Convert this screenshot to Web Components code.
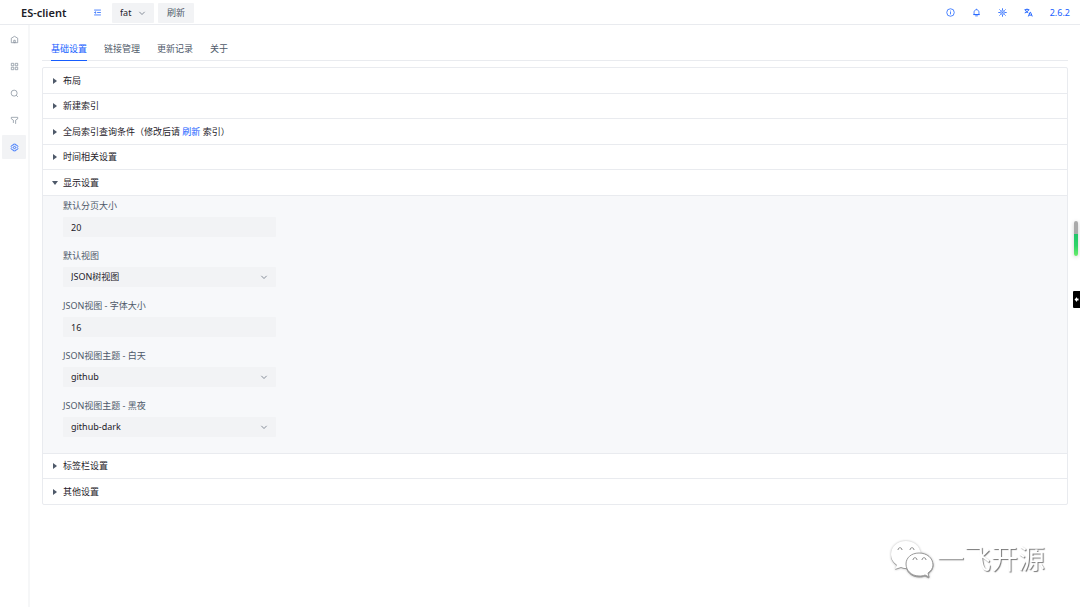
<!DOCTYPE html>
<html lang="zh-CN">
<head>
<meta charset="utf-8">
<meta name="viewport" content="width=device-width, initial-scale=1">
<title>ES-client</title>
<style>
  :root {
    --primary: #165dff;
    --text-1: #1d2129;
    --text-2: #4e5969;
    --text-3: #86909c;
    --fill: #f2f3f5;
    --body: #f7f8fa;
    --border: #e9ebef;
  }

  html, body {
    margin: 0;
    background: #fff;
    color: var(--text-1);
    font: 9px/16px "Noto Sans", "Noto Sans CJK SC", sans-serif;
  }
</style>
</head>
<body>
<es-app>
  <es-header slot="header" name="ES-client" version="2.6.2"></es-header>
  <es-sidebar slot="side"></es-sidebar>

  <es-tabs>
    <a href="#base" aria-current="page">基础设置</a>
    <a href="#link">链接管理</a>
    <a href="#record">更新记录</a>
    <a href="#about">关于</a>
  </es-tabs>

  <es-collapse>
    <es-panel><span slot="title">布局</span></es-panel>
    <es-panel><span slot="title">新建索引</span></es-panel>
    <es-panel><span slot="title">全局索引查询条件（修改后请 <a href="#refresh">刷新</a> 索引）</span></es-panel>
    <es-panel><span slot="title">时间相关设置</span></es-panel>
    <es-panel open>
      <span slot="title">显示设置</span>
      <es-field label="默认分页大小" value="20"></es-field>
      <es-field label="默认视图" value="JSON树视图" type="select"></es-field>
      <es-field label="JSON视图 - 字体大小" value="16"></es-field>
      <es-field label="JSON视图主题 - 白天" value="github" type="select"></es-field>
      <es-field label="JSON视图主题 - 黑夜" value="github-dark" type="select"></es-field>
    </es-panel>
    <es-panel><span slot="title">标签栏设置</span></es-panel>
    <es-panel><span slot="title">其他设置</span></es-panel>
  </es-collapse>
</es-app>
<es-meter></es-meter>
<es-drawer-handle></es-drawer-handle>
<es-watermark>一飞开源</es-watermark>

<script>
const ICONS = {
  fold: '<path d="M42 11H6M42 24H22M42 37H6M14 28l-6-4 6-4v8Z"/>',
  home: '<path d="M7 17 24 7l17 10v24H7V17ZM20 28h8v13h-8V28Z"/>',
  apps: '<path d="M7 7h13v13H7V7Zm21 0h13v13H28V7ZM7 28h13v13H7V28Zm21 0h13v13H28V28Z"/>',
  search: '<circle cx="22" cy="22" r="16"/><path d="m33 33 9 9"/>',
  filter: '<path d="M30 42V22l11-7V7H7v8l11 7v15"/>',
  settings: '<path d="M19 6h10l2 6 6-1 5 8-4 5 4 5-5 8-6-1-2 6H19l-2-6-6 1-5-8 4-5-4-5 5-8 6 1 2-6Z"/><circle cx="24" cy="24" r="6"/>',
  info: '<circle cx="24" cy="24" r="20"/><path d="M24 20v14M24 14v4"/>',
  bell: '<path d="M24 9c7 0 13 6 13 13v13H11V22c0-7 6-13 13-13Zm0 0V4M6 35h36M17 42h14"/>',
  sun: '<circle cx="24" cy="24" r="10"/><circle cx="24" cy="24" r="3"/><path stroke-width="5" d="M24 2v8M24 38v8M2 24h8M38 24h8M8 8l6 6M34 34l6 6M8 40l6-6M34 14l6-6"/>',
  lang: '<path stroke-width="5" d="M3 9h25M16 3v6M7 9c2 9 8 14 16 17M25 9C23 18 15 23 4 26M23 45l9-22h3l9 22M27 38h13"/>',
  down: '<path d="M40 17 24 33 8 17"/>',
};

class EsIcon extends HTMLElement {
  constructor() {
    super();
    this.attachShadow({ mode: 'open' });
    this.shadowRoot.innerHTML = `
      <style>
        :host { display: block; width: 9px; height: 9px; flex: none; }
        svg { display: block; width: 100%; height: 100%; }
      </style>
      <svg viewBox="0 0 48 48" fill="none" stroke="currentColor" stroke-width="4" aria-hidden="true">
        ${ICONS[this.getAttribute('name')] || ''}
      </svg>`;
  }
}
window.customElements.define('es-icon', EsIcon);

class EsApp extends HTMLElement {
  constructor() {
    super();
    this.attachShadow({ mode: 'open' });
    this.shadowRoot.innerHTML = `
      <style>
        :host { display: flex; flex-direction: column; min-height: 100vh; }
        .body { display: flex; flex: 1; }
        main { flex: 1; min-width: 0; padding: 16px 12px; }
      </style>
      <slot name="header"></slot>
      <div class="body">
        <slot name="side"></slot>
        <main><slot></slot></main>
      </div>`;
  }
}
window.customElements.define('es-app', EsApp);

class EsHeader extends HTMLElement {
  constructor() {
    super();
    this.attachShadow({ mode: 'open' });
    this.shadowRoot.innerHTML = `
      <style>
        :host { display: block; border-bottom: 1px solid var(--border); }
        header { display: flex; align-items: center; height: 24px; padding: 1px 10px 0 21px; box-sizing: border-box; }
        h1 { margin: 0; width: 68px; font-size: 11px; font-weight: 600; }
        button { border: 0; padding: 4px; background: none; color: var(--primary); font: inherit; }
        .index { display: grid; margin-left: 6px; }
        select, .index es-icon { grid-area: 1 / 1; }
        select, .refresh {
          appearance: none;
          box-sizing: border-box;
          height: 20px;
          border: 0;
          border-radius: 1px;
          background: var(--fill);
          color: var(--text-1);
          font: inherit;
        }
        select { width: 42px; padding: 0 8px; }
        .index es-icon { align-self: center; justify-self: end; margin-right: 8px; width: 8px; height: 8px; color: var(--text-2); pointer-events: none; }
        .refresh { margin-left: 4px; padding: 0 9px; color: var(--text-2); }
        nav { display: flex; align-items: center; gap: 9px; margin-left: auto; }
        a { margin-left: 4px; color: var(--primary); text-decoration: none; }
      </style>
      <header>
        <h1>${this.getAttribute('name')}</h1>
        <button aria-label="折叠"><es-icon name="fold"></es-icon></button>
        <div class="index">
          <select aria-label="链接"><option>fat</option></select>
          <es-icon name="down"></es-icon>
        </div>
        <button class="refresh">刷新</button>
        <nav>
          <button aria-label="信息"><es-icon name="info"></es-icon></button>
          <button aria-label="通知"><es-icon name="bell"></es-icon></button>
          <button aria-label="主题"><es-icon name="sun"></es-icon></button>
          <button aria-label="语言"><es-icon name="lang"></es-icon></button>
          <a href="#version">${this.getAttribute('version')}</a>
        </nav>
      </header>`;
  }
}
window.customElements.define('es-header', EsHeader);

class EsSidebar extends HTMLElement {
  constructor() {
    super();
    this.attachShadow({ mode: 'open' });
    const items = [['home', '首页'], ['apps', '数据浏览'], ['search', '基础查询'], ['filter', '高级查询'], ['settings', '设置']];
    this.shadowRoot.innerHTML = `
      <style>
        :host { display: block; border-right: 2px solid #f6f7f8; }
        nav { display: flex; flex-direction: column; gap: 3px; padding: 2px 2px 2px 2px; }
        a { display: grid; place-items: center; width: 24px; height: 24px; border-radius: 1px; color: var(--text-3); }
        a[aria-current] { background: var(--fill); color: var(--primary); }
      </style>
      <nav>
        ${items.map(([icon, label]) => `
          <a href="#${icon}" aria-label="${label}" ${icon === 'settings' ? 'aria-current="page"' : ''}>
            <es-icon name="${icon}"></es-icon>
          </a>`).join('')}
      </nav>`;
  }
}
window.customElements.define('es-sidebar', EsSidebar);

class EsTabs extends HTMLElement {
  constructor() {
    super();
    this.attachShadow({ mode: 'open' });
    this.shadowRoot.innerHTML = `
      <style>
        :host { display: block; margin-bottom: 6px; box-shadow: inset 0 -1px var(--border); }
        nav { display: flex; gap: 17px; padding: 0 9px; }
        ::slotted(a) {
          padding-bottom: 3px;
          border-bottom: 1px solid transparent;
          color: var(--text-2);
          text-decoration: none;
        }
        ::slotted(a[aria-current]) { border-color: var(--primary); color: var(--primary); }
      </style>
      <nav><slot></slot></nav>`;
  }
}
window.customElements.define('es-tabs', EsTabs);

class EsCollapse extends HTMLElement {
  constructor() {
    super();
    this.attachShadow({ mode: 'open' });
    this.shadowRoot.innerHTML = `
      <style>
        :host { display: block; border: 1px solid var(--border); border-radius: 2px; }
        ::slotted(es-panel) { --row: 25px; border-bottom: 1px solid var(--border); }
        ::slotted(es-panel:nth-child(even)) { --row: 24px; }
        ::slotted(es-panel:last-child) { border-bottom: 0; }
      </style>
      <slot></slot>`;
  }
}
window.customElements.define('es-collapse', EsCollapse);

class EsPanel extends HTMLElement {
  constructor() {
    super();
    this.attachShadow({ mode: 'open' });
    this.shadowRoot.innerHTML = `
      <style>
        :host { display: block; }
        summary { display: flex; align-items: center; gap: 5px; height: var(--row, 25px); padding: 0 9px; list-style: none; cursor: pointer; }
        svg { width: 6px; height: 6px; fill: var(--text-2); }
        details[open] svg { transform: rotate(90deg); }
        .content { display: flex; flex-direction: column; gap: 11px; padding: 2px 20px 16px; border-top: 1px solid var(--border); background: var(--body); }
        ::slotted(span) { white-space: pre; }
      </style>
      <details ${this.hasAttribute('open') ? 'open' : ''}>
        <summary>
          <svg viewBox="0 0 6 6" aria-hidden="true"><path d="M1 0v6L5 3Z"/></svg>
          <slot name="title"></slot>
        </summary>
        <div class="content"><slot></slot></div>
      </details>`;
    this.querySelectorAll('a').forEach(a => {
      a.style.color = 'var(--primary)';
      a.style.textDecoration = 'none';
    });
  }
}
window.customElements.define('es-panel', EsPanel);

class EsField extends HTMLElement {
  constructor() {
    super();
    this.attachShadow({ mode: 'open' });
    const value = this.getAttribute('value');
    const select = this.getAttribute('type') === 'select';
    this.shadowRoot.innerHTML = `
      <style>
        :host { display: block; width: 213px; max-width: 100%; }
        label { display: block; margin-bottom: 3px; color: var(--text-2); }
        .box { display: grid; align-items: center; border-radius: 1px; background: var(--fill); }
        input, select {
          grid-area: 1 / 1;
          appearance: none;
          box-sizing: border-box;
          width: 100%;
          height: 20px;
          border: 0;
          padding: 0 8px;
          background: none;
          color: var(--text-1);
          font: inherit;
        }
        es-icon { grid-area: 1 / 1; justify-self: end; margin-right: 8px; width: 8px; height: 8px; color: var(--text-2); pointer-events: none; }
      </style>
      <label for="control">${this.getAttribute('label')}</label>
      <div class="box">
        ${select ?
          `<select id="control"><option>${value}</option></select><es-icon name="down"></es-icon>` :
          `<input id="control" inputmode="numeric" value="${value}">`}
      </div>`;
  }
}
window.customElements.define('es-field', EsField);

// floating usage meter on the right edge
class EsMeter extends HTMLElement {
  constructor() {
    super();
    this.attachShadow({ mode: 'open' });
    this.shadowRoot.innerHTML = `
      <style>
        :host {
          position: fixed;
          top: 221px;
          right: 2px;
          width: 4px;
          height: 35px;
          border-radius: 2px;
          background: linear-gradient(#aaa 13px, #22c56b 13px, #2fd567 25px, #6bec6b);
          box-shadow: 0 1px 4px #0003;
        }
      </style>`;
  }
}
window.customElements.define('es-meter', EsMeter);

class EsDrawerHandle extends HTMLElement {
  constructor() {
    super();
    this.attachShadow({ mode: 'open' });
    this.shadowRoot.innerHTML = `
      <style>
        :host { position: fixed; top: 291px; right: 0; }
        button { display: grid; place-items: center; width: 7px; height: 17px; border: 0; border-radius: 1px 0 0 1px; padding: 0; background: #000; }
        svg { width: 5px; height: 5px; fill: #fff; }
      </style>
      <button aria-label="展开"><svg viewBox="0 0 5 5"><path d="M0.5 2.5 3 0v1.5h1.5v2H3V5Z"/></svg></button>`;
  }
}
window.customElements.define('es-drawer-handle', EsDrawerHandle);

class EsWatermark extends HTMLElement {
  constructor() {
    super();
    this.attachShadow({ mode: 'open' });
    this.shadowRoot.innerHTML = `
      <style>
        :host {
          position: fixed;
          right: 35px;
          bottom: 28px;
          display: flex;
          align-items: center;
          gap: 3px;
          color: #fff;
          font-size: 27px;
          line-height: 40px;
          text-shadow: 1px 1px 1px #777;
          pointer-events: none;
        }
        svg { width: 44px; height: 40px; fill: #fff; filter: drop-shadow(0 1px 0 #999) drop-shadow(0 0 1px #bbb); }
        .front { stroke: #999; stroke-width: 1; }
        .eye { fill: none; stroke: #888; stroke-width: 1; }
      </style>
      <svg viewBox="0 0 44 40" aria-hidden="true">
        <path d="M16 2C7 2 1 8 1 15c0 5 2 8 6 11l-2 4 6-2c2 1 4 1 6 1-1-8 5-14 14-14C30 7 24 2 16 2Z"/>
        <path class="front" d="M29 14c-8 0-13 5-13 11s5 12 13 12c2 0 4 0 6-1l4 2-1-4c3-2 5-5 5-8 0-7-6-12-14-12Z"/>
        <path class="eye" d="M8 11c0-3 4-3 4 0M20 11c0-3 4-3 4 0M23 21c0-3 4-3 4 0M32 21c0-3 4-3 4 0"/>
      </svg>
      <slot></slot>`;
  }
}
window.customElements.define('es-watermark', EsWatermark);
</script>
</body>
</html>
